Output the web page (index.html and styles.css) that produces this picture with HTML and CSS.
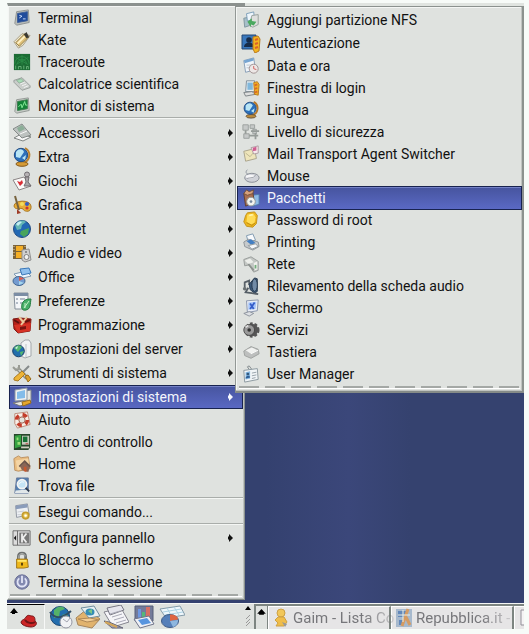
FILE: index.html
```html
<!DOCTYPE html>
<html lang="it">
<head>
<meta charset="utf-8">
<title>Desktop</title>
<link rel="stylesheet" href="styles.css">
</head>
<body>
<div class="screen">
<main class="desktop">
<nav class="menu menu-main" aria-label="Menu principale">
<ul class="group">
<li><button class="item"><svg class="icon" viewBox="0 0 20 20"><path d="M4 3l13-2 1 14-14 3-2-2z" fill="#b9bdb9" stroke="#8b9090"/><path d="M5 5l11-2v10L5 15z" fill="#204c9c" stroke="#3b5c96"/><path d="M7 7l3 1-3 2M11 11h3" stroke="#d7e5ff"/></svg><span>Terminal</span></button></li>
<li><button class="item"><svg class="icon" viewBox="0 0 20 20"><path d="M1 12l9-9 9 2-8 11-5 3z" fill="#efe7cb" stroke="#a39a80"/><path d="M3 13L13 3l4 4L7 17z" fill="#dfc078" stroke="#8d7843"/><path d="M12 4l3-3 3 6-3 1z" fill="#3a3832"/><path d="M5 14l8-8" stroke="#fff3c8" stroke-width="2"/></svg><span>Kate</span></button></li>
<li><button class="item"><svg class="icon" viewBox="0 0 20 20"><path d="M1 1h18v18H1z" fill="#1c6c34"/><path d="M2 12a8 8 0 0 1 16 0M5 12a5 5 0 0 1 10 0M10 2v11M3 5l14 8M17 5L3 13" stroke="#2c8d48"/><path d="M3 18v-4M6 18v-3h3v3M12 18v-4M15 18v-3h2v3" stroke="#6bb47a"/></svg><span>Traceroute</span></button></li>
<li><button class="item"><svg class="icon" viewBox="0 0 20 20"><path d="M1 6l9-3 9 9v2l-9 3-9-9z" fill="#c9cdca" stroke="#959b98"/><path d="M4 6l5-2 3 3-5 2z" fill="#a7dbb5" stroke="#8fab97"/><path d="M8 10l5-2M10 12l5-2M12 14l5-2" stroke="#f5f5f5"/></svg><span>Calcolatrice scientifica</span></button></li>
<li><button class="item"><svg class="icon" viewBox="0 0 20 20"><path d="M4 3l13-2 1 14-14 3-2-2z" fill="#c7ccc7" stroke="#8f9491"/><path d="M5 5l11-2v10L5 15z" fill="#128337" stroke="#3c7a4e"/><path d="M6 11l3-3 1 4 3-7 1 4h2" stroke="#8ef2a0"/></svg><span>Monitor di sistema</span></button></li>
</ul>
<ul class="group roomy">
<li><button class="item"><svg class="icon" viewBox="0 0 20 20"><path d="M2 15l7-4 10 3-8 4z" fill="#f6f6f6" stroke="#808583"/><path d="M1 6l9-5 4 5 5 6-9 3z" fill="#bdc2c0" stroke="#858b89"/><path d="M5 5l5-3 3 4-6 3z" fill="#8cae98"/><path d="M8 11l7-3" stroke="#f8f8f8"/></svg><span>Accessori</span><i class="arrow"></i></button></li>
<li><button class="item"><svg class="icon" viewBox="0 0 20 20"><path d="M13 1c7 4 5 13-2 15" stroke="#b9812f" stroke-width="2"/><ellipse cx="10" cy="17" rx="6" ry="2.3" fill="#d49a36" stroke="#835a20"/><circle cx="9" cy="8" r="6.7" fill="#2c70bb" stroke="#244d81"/><path d="M4 5c3-4 7-3 8 0l-4 6-4-1zM10 11l4-3-1 5z" fill="#b9e5f4"/></svg><span>Extra</span><i class="arrow"></i></button></li>
<li><button class="item"><svg class="icon" viewBox="0 0 20 20"><path d="M1 9l11-3 7 9-12 4z" fill="#faf9f8" stroke="#8b8585"/><path d="M5 10l3 1 2-2 1 3-3 3z" fill="#d92e36"/><circle cx="15" cy="3.5" r="2.5" fill="#b7b3b5" stroke="#716d71"/><path d="M13 6h4l-1 5 3 4h-7l2-4z" fill="#aaa6a9" stroke="#716d71"/></svg><span>Giochi</span><i class="arrow"></i></button></li>
<li><button class="item"><svg class="icon" viewBox="0 0 20 20"><path d="M2 11C2 5 18 4 19 11c1 7-7 6-8 3-2-2-8 2-9-3z" fill="#e9ad37" stroke="#a97a2a"/><circle cx="10" cy="9" r="2" fill="#f2dc5c"/><circle cx="15" cy="9" r="2" fill="#345cc3"/><circle cx="15" cy="13" r="1.6" fill="#cc362e"/><path d="M3 1l4 14" stroke="#77633f" stroke-width="2"/><path d="M5 14l4 4-4 1z" fill="#9e3c26"/></svg><span>Grafica</span><i class="arrow"></i></button></li>
<li><button class="item"><svg class="icon" viewBox="0 0 20 20"><circle cx="10" cy="10" r="8.5" fill="#2369b4" stroke="#214c83"/><path d="M3 6c4-6 9-5 11-3l-4 3-1 4-4 1z" fill="#64b6b4"/><path d="M9 12l8-3-1 6-4 3-4-3z" fill="#48a45d"/><path d="M4 5c2-3 5-3 6-2L6 7z" fill="#c2ecf1"/></svg><span>Internet</span><i class="arrow"></i></button></li>
<li><button class="item"><svg class="icon" viewBox="0 0 20 20"><path d="M1 2h13v14H1z" fill="#7b6238"/><path d="M4 3h7v5H4zM4 9h7v6H4z" fill="#f4ae25"/><path d="M2 3v12M13 3v12" stroke="#e8d3a0" stroke-dasharray="1 2"/><path d="M10 7l7-1 2 11-6 2-3-2z" fill="#d0d0d0" stroke="#8f8f8f"/><circle cx="14.5" cy="14" r="2.5" fill="#f2f2f2" stroke="#808080"/><circle cx="14" cy="9" r="1" fill="#777"/></svg><span>Audio e video</span><i class="arrow"></i></button></li>
<li><button class="item"><svg class="icon" viewBox="0 0 20 20"><path d="M2 7l12-3 5 5-12 3z" fill="#eef6fd" stroke="#7f99b1"/><path d="M8 2l9-1 2 5-9 2z" fill="#8fc0ee" stroke="#3977b9"/><ellipse cx="7" cy="14" rx="6" ry="4.5" fill="#739bd0" stroke="#426792"/><path d="M7 14V9.500l5 2z" fill="#d95c4f"/><path d="M7 14l5 2-5 2z" fill="#a4d5ed"/></svg><span>Office</span><i class="arrow"></i></button></li>
<li><button class="item"><svg class="icon" viewBox="0 0 20 20"><path d="M2 2h14v16H3z" fill="#f4f6f8" stroke="#86909a"/><path d="M2 2h14v3H2z" fill="#7b8da4"/><path d="M4 8h2M4 12h2M8 8h5M8 12h3" stroke="#718094"/><path d="M10 13c2-5 6-5 9-5-1 5 0 10-5 11-4 1-5-2-4-6z" fill="#48af69" stroke="#237b40"/><path d="M12 17l5-7M13 12v5" stroke="#c5f0c8"/></svg><span>Preferenze</span><i class="arrow"></i></button></li>
<li><button class="item"><svg class="icon" viewBox="0 0 20 20"><path d="M1 4l7-1 11 1-1 12-12 2-4-4z" fill="#b52019" stroke="#7d1c16"/><path d="M2 10l17-2-1 8-12 2z" fill="#d63225"/><path d="M7 2l5 6M15 2l-6 8" stroke="#e9c79b" stroke-width="2"/><path d="M2 5l5 3M13 7l5-2" stroke="#5f120e" stroke-width="2"/><path d="M8 12l6-1v3l-6 1z" fill="#79130f"/></svg><span>Programmazione</span><i class="arrow"></i></button></li>
<li><button class="item"><svg class="icon" viewBox="0 0 20 20"><path d="M9 4l4-3h4l2 3v13l-6 2-4-2z" fill="#f2f3f4" stroke="#a3a7ab"/><path d="M14 5v13" stroke="#c0c5c9"/><circle cx="6.500" cy="12" r="5.800" fill="#216fac" stroke="#173f6b"/><path d="M2 9c3-4 6-3 8-1l-4 5zM8 13l4-1-3 5z" fill="#56b76e"/><path d="M3 9l3-2-1 3z" fill="#d7f3f5"/></svg><span>Impostazioni del server</span><i class="arrow"></i></button></li>
<li><button class="item"><svg class="icon" viewBox="0 0 20 20"><path d="M5 5l10 10" stroke="#85887f" stroke-width="4"/><path d="M5 5l10 10" stroke="#cfd1ca" stroke-width="2"/><path d="M1 4l3 3 3-1 0-4" stroke="#9a9c95" stroke-width="2"/><path d="M17 3l-6 6" stroke="#858a8a" stroke-width="2"/><path d="M10 8l3 3-7 7-4-1v-2z" fill="#edb436" stroke="#a97a24"/><path d="M13 13l3-1 3 4-3 3z" fill="#dca02d" stroke="#9a6d1d"/></svg><span>Strumenti di sistema</span><i class="arrow"></i></button></li>
<li><button class="item selected" aria-expanded="true"><svg class="icon" viewBox="0 0 20 20"><path d="M14 4l5-1v12l-6 3z" fill="#e6e6df" stroke="#7f868d"/><path d="M3 3l12-2v12L3 14z" fill="#f0f1ef" stroke="#8c97a4"/><path d="M5 5l8-2v8l-8 1z" fill="#83bce9"/><path d="M1 16l10-2 6 2-9 3z" fill="#e6e5df" stroke="#777"/><path d="M10 15l8-2 1 3-8 3z" fill="#e6a72d" stroke="#966b1f"/></svg><span>Impostazioni di sistema</span><i class="arrow"></i></button></li>
</ul>
<ul class="group flush">
<li><button class="item"><svg class="icon" viewBox="0 0 20 20"><path d="M2 3l14-2 3 14-14 4-3-5z" fill="#f7eee6" stroke="#b98775"/><circle cx="10" cy="10" r="6" stroke="#c43c29" stroke-width="4" stroke-dasharray="5 4.400"/><circle cx="10" cy="10" r="3.500" fill="#e4e4dc" stroke="#9a5140"/></svg><span>Aiuto</span></button></li>
<li><button class="item"><svg class="icon" viewBox="0 0 20 20"><path d="M1 1h18v15l-2 3H1z" fill="#27462b"/><path d="M2 3l7-1v13l-7 2z" fill="#36a343"/><path d="M10 3h8v10h-8z" fill="#c4c8ba"/><path d="M11 4h5v6h-5z" fill="#187135"/><path d="M4 5h2v3H4zM5 10h3v3H5z" fill="#9bdd78"/><path d="M9 15h9v2H9z" fill="#d0cfc0"/><path d="M14 12h3" stroke="#b53931"/></svg><span>Centro di controllo</span></button></li>
<li><button class="item"><svg class="icon" viewBox="0 0 20 20"><path d="M1 4l5-3 3 2 8-1 2 13-13 3-4-1z" fill="#e9bd81" stroke="#b98e60"/><path d="M3 6l14-2 1 11L5 17z" fill="#f4d5a5"/><path d="M8 13l5-5 6 5-2 6-7-2z" fill="#8b6656"/><path d="M7 13l6-6 6 6" stroke="#6b554b" stroke-width="2"/><path d="M12 13h3v6l-3-1z" fill="#c55930"/></svg><span>Home</span></button></li>
<li><button class="item"><svg class="icon" viewBox="0 0 20 20"><path d="M4 1h13v17H2z" fill="#547eae" stroke="#65779a"/><path d="M3 15l13-1 2 4H2z" fill="#e1e7e9"/><circle cx="10" cy="8" r="5" fill="#c4e4f6" stroke="#f3f3f3" stroke-width="2"/><path d="M14 12l4 4" stroke="#303c4e" stroke-width="2"/><path d="M7 8c1-3 4-3 5-2" stroke="#fff"/></svg><span>Trova file</span></button></li>
</ul>
<ul class="group">
<li><button class="item"><svg class="icon" viewBox="0 0 20 20"><path d="M3 3l13-2 2 12-14 3z" fill="#edf0f4" stroke="#8b929d"/><path d="M3 3l13-2v4L3 7z" fill="#8a9cba"/><path d="M5 10l7-1M5 13h5" stroke="#c5c9cf"/><circle cx="14" cy="14" r="3.500" fill="#f1d46c" stroke="#c59d2e" stroke-width="2"/><circle cx="14" cy="14" r="1.300" fill="#fff"/></svg><span>Esegui comando...</span></button></li>
</ul>
<ul class="group">
<li><button class="item"><svg class="icon" viewBox="0 0 20 20"><path d="M0 2h19v16H0z" fill="#ddd" stroke="#666"/><path d="M5 2v16" stroke="#666"/><path d="M3.500 7v6L1 10z" fill="#111"/><path d="M7 4h11v12H7z" fill="#777"/><path d="M10 5v10M15 5l-4 5 4 5" stroke="#eee" stroke-width="2"/></svg><span>Configura pannello</span><i class="arrow"></i></button></li>
<li><button class="item"><svg class="icon" viewBox="0 0 20 20"><path d="M6 10V6c0-5 8-5 8 0v4" stroke="#6d7070" stroke-width="3"/><path d="M6.500 10V6c0-4 7-4 7 0" stroke="#c4c6c2"/><path d="M4 9h12l1 9-5 1H4z" fill="#efb91d" stroke="#9b7214"/><path d="M5 11h10" stroke="#ffe86c" stroke-width="2"/><path d="M10 13v3" stroke="#4d390a" stroke-width="2"/></svg><span>Blocca lo schermo</span></button></li>
<li><button class="item"><svg class="icon" viewBox="0 0 20 20"><circle cx="10" cy="10" r="8" fill="#8289b0" stroke="#626890"/><path d="M7 6a5 5 0 1 0 6 0M10 3v8" stroke="#e2e5f6" stroke-width="2"/></svg><span>Termina la sessione</span></button></li>
</ul>
<div class="tear"></div>
</nav>

<nav class="menu menu-sub" aria-label="Impostazioni di sistema">
<ul class="group">
<li><button class="item"><svg class="icon" viewBox="0 0 20 20"><path d="M2 8l5-1 2 9-6 2z" fill="#a7bfc9" stroke="#7c939c"/><path d="M5 3l8-2 1 9-8 1z" fill="#eef6fc" stroke="#779bb5"/><path d="M11 5l7-1v11l-6 3-4-2z" fill="#dedfdd" stroke="#939c98"/><path d="M6 12l5-4v3l5 1-3 4-3-1v3z" fill="#4ba960"/></svg><span>Aggiungi partizione NFS</span></button></li>
<li class="tall"><button class="item"><svg class="icon" viewBox="0 0 20 20"><path d="M1 2h14v14H1z" fill="#3977bc" stroke="#244974"/><circle cx="8" cy="7" r="2.800" fill="#172c49"/><path d="M3 14c0-6 10-6 10 0z" fill="#172c49"/><path d="M12 4l5-1 2 3-1 12-4 2-2-4z" fill="#f3b61f" stroke="#b9781f"/><path d="M14 7l3-1M14 11l3-1M14 15l3-1" stroke="#db622a" stroke-width="2"/></svg><span>Autenticazione</span></button></li>
<li><button class="item"><svg class="icon" viewBox="0 0 20 20"><path d="M2 4l11-3 2 13-11 3z" fill="#f0f5fa" stroke="#839bb3"/><path d="M2 4l11-3v3L3 7z" fill="#76a5d2"/><path d="M5 9h6M5 12h5" stroke="#bac4cc"/><circle cx="13" cy="13" r="5" fill="#ece7e6" stroke="#9d8d8d"/><path d="M13 10v3l3 1" stroke="#cf5756"/></svg><span>Data e ora</span></button></li>
<li><button class="item"><svg class="icon" viewBox="0 0 20 20"><path d="M5 2h9v12H4z" fill="#e6edf1" stroke="#7b8a97"/><path d="M6 4h6v8H6z" fill="#80b7db"/><path d="M2 15l9-1 4 3-11 2z" fill="#dedfde" stroke="#777e80"/><path d="M13 4l4-1 2 3-1 12-4-1z" fill="#f1af22" stroke="#b9781f"/><path d="M14 7l3-1M14 11l3-1M14 15l3-1" stroke="#d7682b" stroke-width="2"/></svg><span>Finestra di login</span></button></li>
<li><button class="item"><svg class="icon" viewBox="0 0 20 20"><path d="M13 1c7 4 5 13-2 15" stroke="#b87928" stroke-width="2"/><ellipse cx="10" cy="17" rx="5.500" ry="2" fill="#bd8c3c" stroke="#62503b"/><circle cx="9" cy="8" r="6.700" fill="#2b70bb" stroke="#244d81"/><path d="M4 5c3-4 7-3 8 0l-4 6-4-1zM10 11l4-3-1 5z" fill="#b9e5f4"/></svg><span>Lingua</span></button></li>
<li><button class="item"><svg class="icon" viewBox="0 0 20 20"><path d="M1 2h6v6H1zM9 2h5v4H9zM2 12h6v5H2zM12 7h4v5h-4z" fill="#c6c9c8" stroke="#999e9c"/><path d="M4 8v4M8 14h3M10 9h9M11 14h7M15 11v7" stroke="#959b98" stroke-width="2"/></svg><span>Livello di sicurezza</span></button></li>
<li><button class="item"><svg class="icon" viewBox="0 0 20 20"><path d="M2 7l12-3 2 11-12 3z" fill="#eee5bb" stroke="#a69f88"/><path d="M4 9l5 4 5-6" stroke="#bab38e"/><path d="M10 3l8-2v8l-5 1z" fill="#f6e9eb" stroke="#ad9a9f"/><path d="M12 3l4-1v4l-4 1z" fill="#cf5d90"/></svg><span>Mail Transport Agent Switcher</span></button></li>
<li><button class="item"><svg class="icon" viewBox="0 0 20 20"><path d="M9 9C5 8 3 6 6 3" stroke="#888f99"/><ellipse cx="11" cy="12" rx="8" ry="5" fill="#d0d2d8" stroke="#858992"/><ellipse cx="9" cy="10.500" rx="5" ry="2" fill="#f6f6f8"/><path d="M5 13c5-2 8 0 10-4" stroke="#999da5"/></svg><span>Mouse</span></button></li>
<li><button class="item selected"><svg class="icon" viewBox="0 0 20 20"><path d="M11 7l8-1v11l-7 2z" fill="#8ebbe5" stroke="#4e79a8"/><path d="M2 5l10-1 2 11-10 4z" fill="#a96f50" stroke="#60402f"/><path d="M2 5l3-4 3 2 5-2-1 4-6 2z" fill="#d6a17b" stroke="#72503a"/><circle cx="10" cy="14" r="4.800" fill="#f3f4ee" stroke="#8c938f"/><circle cx="10" cy="14" r="1.500" fill="#75889e"/></svg><span>Pacchetti</span></button></li>
<li><button class="item"><svg class="icon" viewBox="0 0 20 20"><path d="M6 2l8-1 3 4-1 9-4 4-7-1-3-5 2-7z" fill="#edb71e" stroke="#c18f18"/><path d="M6 4l7-1 2 4-1 6-4 2-5-3z" fill="#ffdc57"/><path d="M5 13l6 3 4-3" stroke="#bc8a10"/><path d="M8 5l4-1" stroke="#fff5ac" stroke-width="2"/></svg><span>Password di root</span></button></li>
<li><button class="item"><svg class="icon" viewBox="0 0 20 20"><path d="M5 3l7-2 3 7-8 2z" fill="#f8fafc" stroke="#7894ad"/><path d="M2 10l5-3 11 3 1 5-7 4-9-4z" fill="#c6cacc" stroke="#8b9296"/><path d="M5 9l5-2 5 4-5 2z" fill="#437fc3"/><path d="M7 14l8-2 3 3-7 3z" fill="#f5f7f9" stroke="#8b9499"/></svg><span>Printing</span></button></li>
<li><button class="item"><svg class="icon" viewBox="0 0 20 20"><path d="M2 5l8-3 8 5v10l-5 2-5-8-5 1z" fill="#c3c7c4" stroke="#959a97"/><path d="M3 6l6-2 4 4-6 2z" fill="#eceeea"/><path d="M13 9l4-2v9l-3 1z" fill="#f0f0ed"/><path d="M7 10l6 7" stroke="#8c918e" stroke-width="2"/><path d="M15 11v4" stroke="#72ad7b" stroke-width="2"/></svg><span>Rete</span></button></li>
<li><button class="item"><svg class="icon" viewBox="0 0 20 20"><path d="M3 12V6l5-2v5" stroke="#596168" stroke-width="2"/><circle cx="3" cy="13" r="2" fill="#6a7072"/><path d="M8 8l6-7 3 1v14l-3 2-5-4z" fill="#3b5878" stroke="#26394f"/><ellipse cx="14" cy="9" rx="3" ry="7" fill="#718ba6" stroke="#243549"/><path d="M7 12l-3 5 7 1 7 1" stroke="#555e66" stroke-width="2"/></svg><span>Rilevamento della scheda audio</span></button></li>
<li><button class="item"><svg class="icon" viewBox="0 0 20 20"><path d="M5 2l13-1-1 12-11 2z" fill="#e9edf5" stroke="#8491a8"/><path d="M7 4l9-1-1 8-8 1z" fill="#a7c6fa"/><path d="M9 5l4 6M14 4l-5 7" stroke="#355cc8" stroke-width="2"/><path d="M2 16l6-2 5 2-5 3z" fill="#dde0e4" stroke="#888e99"/></svg><span>Schermo</span></button></li>
<li><button class="item"><svg class="icon" viewBox="0 0 20 20"><circle cx="11" cy="10" r="7" fill="#555" stroke="#555" stroke-width="3" stroke-dasharray="3 2"/><circle cx="8" cy="10" r="6" fill="#999" stroke="#454545"/><circle cx="8" cy="10" r="2" fill="#333"/><path d="M4 7l3-2" stroke="#ddd" stroke-width="2"/></svg><span>Servizi</span></button></li>
<li><button class="item"><svg class="icon" viewBox="0 0 20 20"><path d="M2 9l8-5 8 3 1 5-9 5-7-3z" fill="#bdbfbe" stroke="#9b9e9c"/><path d="M4 8l7-3 6 3-7 4z" fill="#f1f2f0"/><path d="M10 12l8-4" stroke="#fff"/></svg><span>Tastiera</span></button></li>
<li><button class="item"><svg class="icon" viewBox="0 0 20 20"><path d="M8 5l-2-3 2-1 3 4" stroke="#7d8488"/><path d="M2 6l15-2 1 12-15 3z" fill="#f1f5f7" stroke="#87949b"/><path d="M4 8l5-1v8l-5 1z" fill="#82b6e1"/><circle cx="6.500" cy="10" r="1.500" fill="#34587b"/><path d="M4 15c0-4 5-4 5-1z" fill="#2f5f96"/><path d="M11 9l5-1M11 12l5-1M11 15l4-1" stroke="#909ca4"/></svg><span>User Manager</span></button></li>
</ul>
<div class="tear"></div>
</nav>
</main>

<footer class="panel">
<div class="launchers">
<button class="start" aria-label="Menu"><svg viewBox="0 0 37 24"><path d="M3 8l4-5 4 5H8v1H5V8z" fill="#000"/><path d="M14 17c1-3 4-2 5-5 2-3 4-1 6-1 3 0 3 3 3 5 3 2 1 6-4 6-4 0-10-2-10-5z" fill="#cc2526" stroke="#76191b"/><path d="M18 15c2 3 7 4 10 2" stroke="#701516" stroke-width="2"/></svg></button>
<button class="launch" aria-label="Browser web"><svg viewBox="0 0 26 24"><circle cx="13" cy="11" r="9.500" fill="#236eae" stroke="#1d4874"/><path d="M7 5c5-5 9-4 11-1l-5 2-1 6-5 1zM15 10l6-2-1 5-5 2z" fill="#55b269"/><path d="M3 7c5 7 12 7 21-1" stroke="#314d66" stroke-width="2"/><circle cx="19" cy="17" r="6" fill="#f1f2f5" stroke="#9597a3"/><path d="M16 14l4 3 3-4" stroke="#a5a7b3"/></svg></button>
<button class="launch" aria-label="Posta"><svg viewBox="0 0 26 24"><path d="M1 13l11-9 13 10-8 9-14-3z" fill="#e1b36d" stroke="#a5855c"/><path d="M6 3l13-2 6 10-11 2z" fill="#e9f0f2" stroke="#718d9d"/><ellipse cx="15" cy="7" rx="4.500" ry="3.500" fill="#348db5"/><path d="M13 6l4-2v5z" fill="#7bc584"/><path d="M3 14l12-1 9 2-12 2z" fill="#f3ce95" stroke="#ae8857"/></svg></button>
<button class="launch" aria-label="Videoscrittura"><svg viewBox="0 0 26 24"><path d="M1 7l17-4 8 14-16 5z" fill="#f5f5f8" stroke="#85858e"/><path d="M4 3l14-3 3 5-14 5z" fill="#e5e5ed" stroke="#777782"/><path d="M7 9l10-3M9 12l10-3M11 15l10-3M13 18l10-3" stroke="#aaaab7"/><path d="M1 16l5 1 14 6H9z" fill="#a0a0bc" stroke="#656576"/><path d="M2 17l12 5" stroke="#d2a65a" stroke-width="2"/></svg></button>
<button class="launch" aria-label="Presentazioni"><svg viewBox="0 0 26 24"><path d="M4 1h18v15H4z" fill="#737b9a" stroke="#555e77"/><path d="M7 4h3v9H7z" fill="#6d97e2"/><path d="M11 7h3v8h-3z" fill="#53b87a"/><path d="M15 2h4v12h-4z" fill="#d77065"/><path d="M3 14l15-3 5 8-14 4z" fill="#eef0f5" stroke="#70758a"/><path d="M7 15l9-2 4 5-9 2z" fill="#5795df"/></svg></button>
<button class="launch" aria-label="Foglio di calcolo"><svg viewBox="0 0 26 24"><path d="M1 4l20-3 5 9-19 3z" fill="#eef6fb" stroke="#839aa8"/><path d="M4 7l18-3M6 10l18-3M8 3l5 9M15 2l5 8" stroke="#acd3e4"/><ellipse cx="11" cy="16" rx="8.500" ry="6.500" fill="#557fb9" stroke="#3d5b86"/><path d="M11 16V9.500c5 0 8 2 8 5z" fill="#df6542"/><path d="M11 16l8-1c0 4-3 7-5 7z" fill="#8eb7df"/></svg></button>
</div>
<div class="grip"><svg viewBox="0 0 8 24"><path d="M1 6l3-4 3 4z" fill="#000"/><path d="M2 15l4-4M2 19l4-4M2 22l4-4" stroke="#999"/></svg></div>
<div class="tasks">
<button class="scroll" aria-label="Mostra finestre"><svg viewBox="0 0 11 24"><path d="M1 8l4.500-5L10 8H8v1H3V8z" fill="#000"/></svg></button>
<button class="task"><svg viewBox="0 0 16 20"><circle cx="8" cy="5" r="4" fill="#f2c75a" stroke="#cda044"/><path d="M5 9h6l3 5-3 4H3l2-3-3-3z" fill="#f0bd4b" stroke="#cda044"/><path d="M9 14l5 2-2 3z" fill="#9b9a96"/></svg><span>Gaim - Lista Co</span></button>
<button class="task"><svg viewBox="0 0 16 20"><path d="M0 1h16v18H0z" fill="#a7b9cd"/><path d="M2 3h8v6H2zM3 12h5v5H3z" fill="#6388ba"/><path d="M12 1L6 18M10 9l4 8" stroke="#d69b62" stroke-width="3"/><path d="M2 7h12M7 2v12" stroke="#edf0e7"/></svg><span>Repubblica.it -</span></button>
<button class="task" aria-label="Altra finestra"><svg viewBox="0 0 16 20"><path d="M2 2h12v15H2z" fill="#f4f3f4" stroke="#918f98"/></svg></button>
</div>
</footer>
</div>
</body>
</html>
```
FILE: styles.css
```css
* { box-sizing: border-box; }

body {
  margin: 0;
  background: #f7fbf8;
  color: #111;
  font: 14px/20px Roboto, "Liberation Sans", sans-serif;
}

button {
  margin: 0;
  padding: 0;
  border: 0;
  background: none;
  color: inherit;
  font: inherit;
  text-align: left;
}

svg { fill: none; }

.screen {
  display: flex;
  flex-direction: column;
  min-height: 100vh;
  padding: 3px 5px 5px 7px;
}

.desktop {
  position: relative;
  flex: 1;
  padding-bottom: 3px;
  background: linear-gradient(90deg, #34416f 50%, #3b477a 66%, #35426f 78%);
}

.desktop::before {
  content: "";
  position: absolute;
  inset: 0 0 auto;
  height: 3px;
  background: #e0e4e0;
}

.menu {
  border: solid;
  border-color: #8b918e #8b918e #858b88 #f7faf7;
  background: #dfe2df;
  box-shadow: inset -1px -1px #bfc3c0, inset 1px 1px #f4f6f4;
}

.menu-main {
  position: relative;
  width: 238px;
  padding: 1px 1px 2px;
  border-width: 3px 1px 1px;
}

.menu-sub {
  position: absolute;
  top: 3px;
  left: 228px;
  right: 0;
  padding: 2px 1px 2px 2px;
  border-width: 1px 2px 2px 1px;
  border-left-color: #929895;
}

.group {
  margin: 0;
  padding: 0;
  list-style: none;
}

.group + .group::before {
  content: "";
  display: block;
  height: 3px;
  border-top: 1px solid #a9adaa;
  box-shadow: inset 0 1px #f4f6f4;
}

.group + .group.flush::before { display: none; }

.item {
  display: flex;
  align-items: center;
  gap: 6px;
  width: 100%;
  height: 22px;
  padding: 0 10px 0 3px;
  white-space: nowrap;
}

.roomy .item,
.tall .item { height: 24px; }

.icon {
  flex: none;
  width: 20px;
  height: 18px;
}

.roomy .icon,
.tall .icon { height: 20px; }

.item.selected {
  background: linear-gradient(#46549e, #5a69c4);
  box-shadow: inset 0 0 0 1px #18234f, inset 0 2px #7380c5;
  color: #f4f6fc;
}

.menu-sub .item.selected { box-shadow: 0 0 0 1px #18234f, inset 0 1px #7380c5; }

.arrow {
  width: 5px;
  height: 8px;
  margin-left: auto;
  background: currentColor;
  clip-path: polygon(20% 0, 100% 50%, 20% 100%, 20% 70%, 0 70%, 0 30%, 20% 30%);
}

.tear {
  height: 4px;
  margin: 0 1px;
  border-top: 1px solid transparent;
  border-bottom: 1px solid #fff;
  background: repeating-linear-gradient(90deg, #a4a8a5 0 20px, transparent 20px 26px) padding-box;
}

.panel {
  display: flex;
  height: 26px;
  border-top: 1px solid #f4f6f4;
  background: #dfe2df;
}

.panel svg { display: block; }

.launchers {
  display: flex;
  flex: none;
  gap: 2px;
}

.start {
  width: 38px;
  border-top: 1px solid #000;
  border-right: 1px solid #f7f8f7;
}

.start svg { width: 37px; height: 24px; }

.launch svg { width: 26px; height: 24px; }

.grip {
  width: 8px;
  margin-left: auto;
}

.grip svg { width: 8px; height: 24px; }

.tasks {
  display: flex;
  flex: none;
  width: 270px;
  margin-left: 2px;
  overflow: hidden;
  border-top: 2px solid #7d8581;
  border-left: 2px solid #7d8581;
}

.scroll {
  width: 12px;
  border-right: 1px solid #7d8581;
}

.scroll svg { width: 11px; height: 23px; }

.task {
  display: flex;
  flex: none;
  align-items: center;
  gap: 4px;
  width: 123px;
  padding-left: 4px;
  border: solid;
  border-width: 1px 2px 0 1px;
  border-color: #fff #7d8581 #fff #fff;
  background: #e6e5e6;
  color: #77777b;
  font-size: 15px;
  white-space: nowrap;
}

.task svg {
  flex: none;
  width: 16px;
  height: 20px;
}

.task span { mask-image: linear-gradient(90deg, #000 70%, transparent 110%); }
```
